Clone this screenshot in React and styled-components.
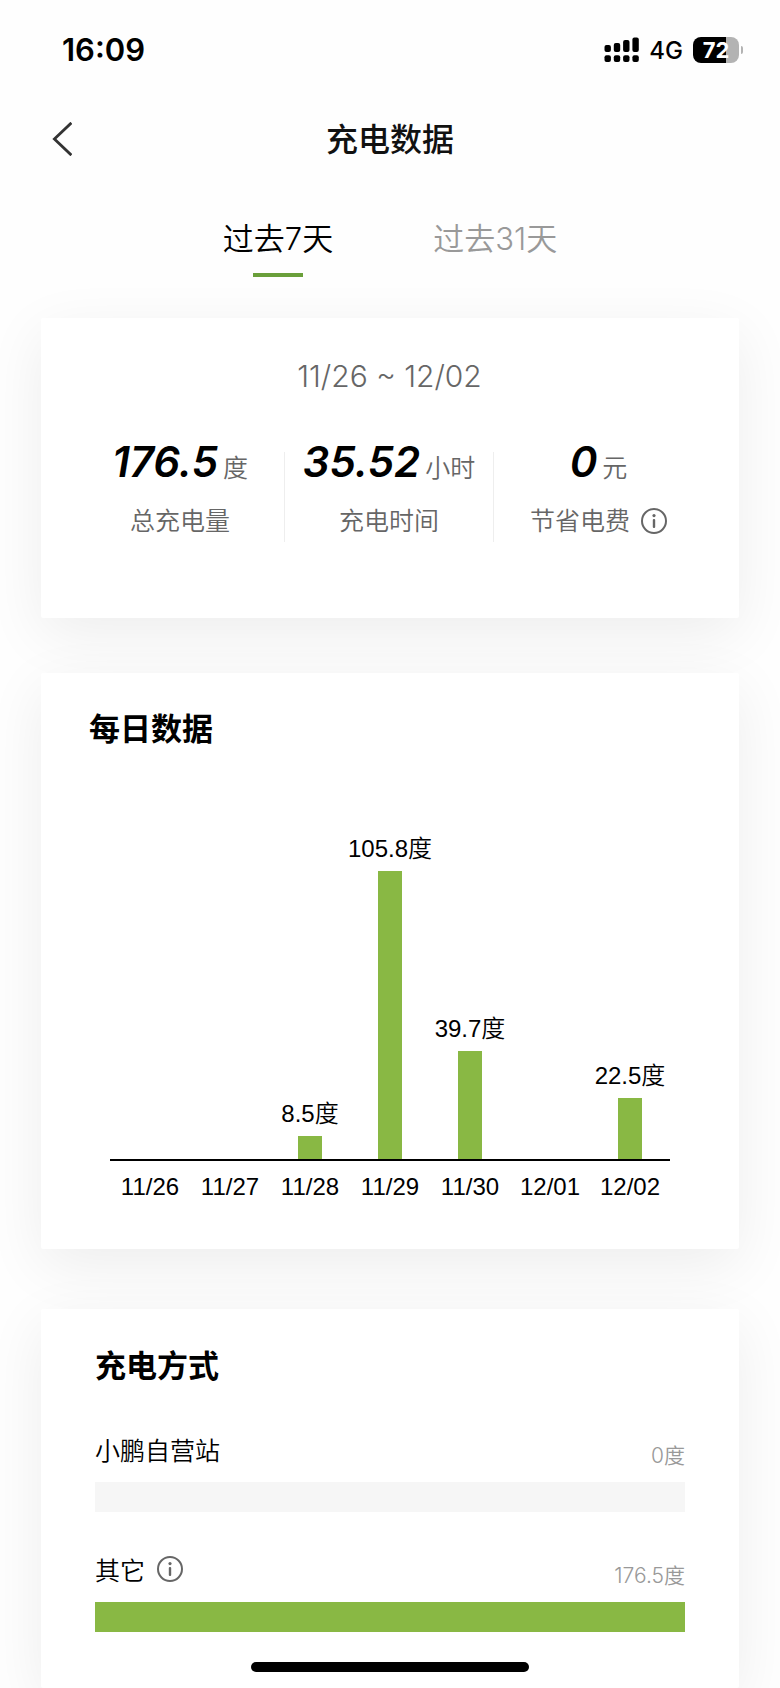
import React, { useState } from "react";
import styled, { createGlobalStyle } from "styled-components";

const tabs = ["过去7天", "过去31天"];

const stats = [
  { value: "176.5", unit: "度", label: "总充电量" },
  { value: "35.52", unit: "小时", label: "充电时间" },
  { value: "0", unit: "元", label: "节省电费", info: true },
];

const days = [
  { date: "11/26", value: 0 },
  { date: "11/27", value: 0 },
  { date: "11/28", value: 8.5 },
  { date: "11/29", value: 105.8 },
  { date: "11/30", value: 39.7 },
  { date: "12/01", value: 0 },
  { date: "12/02", value: 22.5 },
];

const sources = [
  { name: "小鹏自营站", value: 0 },
  { name: "其它", value: 176.5, info: true },
];

const total = 176.5;
const maxDay = 105.8;
const maxBarHeight = 288;

const SignalIcon = () => (
  <svg width="36" height="26" viewBox="0 0 36 26" aria-hidden="true">
    {[8, 6, 3, 0.5].map((top, i) => (
      <g key={top}>
        <rect x={0.5 + i * 9.3} y={top} width="6.4" height={15 - top} rx="2" />
        <rect x={0.5 + i * 9.3} y="18.2" width="6.4" height="6.8" rx="2" />
      </g>
    ))}
  </svg>
);

const InfoIcon = () => (
  <svg width="26" height="26" viewBox="0 0 26 26" aria-hidden="true">
    <circle cx="13" cy="13" r="12" fill="none" stroke="#666" strokeWidth="2" />
    <circle cx="13" cy="7.6" r="1.6" fill="#666" />
    <rect x="11.8" y="11" width="2.4" height="9" rx="1" fill="#666" />
  </svg>
);

const App = () => {
  const [active, setActive] = useState(0);

  return (
    <Page>
      <GlobalStyle />
      <StatusBar>
        <Time>16:09</Time>
        <StatusRight>
          <SignalIcon />
          <Network>4G</Network>
          <Battery>
            <BatteryBody>72</BatteryBody>
            <BatteryTip />
          </Battery>
        </StatusRight>
      </StatusBar>

      <Header>
        <BackButton type="button" aria-label="返回">
          <svg width="20" height="34" viewBox="0 0 20 34">
            <path d="M19.4 0.8 L2.4 17 L19.4 33.2" fill="none" stroke="#333" strokeWidth="2.8" />
          </svg>
        </BackButton>
        <Title>充电数据</Title>
      </Header>

      <Tabs role="tablist">
        {tabs.map((tab, i) => (
          <Tab
            key={tab}
            type="button"
            role="tab"
            aria-selected={active === i}
            $active={active === i}
            onClick={() => setActive(i)}
          >
            {tab}
          </Tab>
        ))}
      </Tabs>

      <Cards>
        <SummaryCard>
          <DateRange>11/26 ~ 12/02</DateRange>
          <StatGrid>
            {stats.map((stat) => (
              <Stat key={stat.label}>
                <StatValue>
                  <em>{stat.value}</em>
                  <span>{stat.unit}</span>
                </StatValue>
                <StatLabel>
                  {stat.label}
                  {stat.info && (
                    <InfoButton type="button" aria-label="节省电费说明">
                      <InfoIcon />
                    </InfoButton>
                  )}
                </StatLabel>
              </Stat>
            ))}
          </StatGrid>
        </SummaryCard>

        <DailyCard>
          <CardTitle>每日数据</CardTitle>
          <Chart>
            <Bars>
              {days.map((day) => (
                <BarColumn key={day.date}>
                  {day.value > 0 && <BarLabel>{day.value}度</BarLabel>}
                  <Bar
                    style={{
                      height: Math.round((day.value / maxDay) * maxBarHeight),
                    }}
                  />
                </BarColumn>
              ))}
            </Bars>
            <Dates>
              {days.map((day) => (
                <span key={day.date}>{day.date}</span>
              ))}
            </Dates>
          </Chart>
        </DailyCard>

        <SourceCard>
          <CardTitle>充电方式</CardTitle>
          <SourceList>
            {sources.map((source) => (
              <li key={source.name}>
                <SourceHead>
                  <SourceName>
                    {source.name}
                    {source.info && (
                      <InfoButton type="button" aria-label="其它说明">
                        <InfoIcon />
                      </InfoButton>
                    )}
                  </SourceName>
                  <SourceValue>{source.value}度</SourceValue>
                </SourceHead>
                <Track>
                  <Fill style={{ width: `${(source.value / total) * 100}%` }} />
                </Track>
              </li>
            ))}
          </SourceList>
        </SourceCard>
      </Cards>

      <HomeIndicator />
    </Page>
  );
};

export default App;

const GlobalStyle = createGlobalStyle`
  * {
    box-sizing: border-box;
  }
  body {
    margin: 0;
    background: #fefefe;
  }
  button {
    border: none;
    padding: 0;
    background: none;
    font: inherit;
    color: inherit;
    cursor: pointer;
  }
  svg {
    display: block;
  }
`;

const Page = styled.div`
  min-height: 100vh;
  display: flex;
  flex-direction: column;
  overflow: hidden;
  font-family: Inter, "Noto Sans CJK SC", sans-serif;
  font-weight: 350;
  color: #000;
`;

const StatusBar = styled.div`
  display: flex;
  justify-content: space-between;
  align-items: center;
  height: 100px;
  padding: 0 37px 0 62px;
`;

const Time = styled.span`
  font-size: 31px;
  font-weight: 600;
  line-height: 40px;
`;

const StatusRight = styled.div`
  display: flex;
  align-items: center;
`;

const Network = styled.span`
  margin: 0 10px 0 9px;
  padding-top: 1px;
  font-size: 24px;
  font-weight: 500;
  line-height: 30px;
`;

const Battery = styled.div`
  display: flex;
  align-items: center;
  gap: 2px;
`;

const BatteryBody = styled.span`
  width: 46px;
  height: 26px;
  border-radius: 8px;
  background: linear-gradient(90deg, #000 72%, #b3b3b3 72%);
  color: #fff;
  font-size: 22px;
  font-weight: 700;
  line-height: 26px;
  text-align: center;
`;

const BatteryTip = styled.span`
  width: 2px;
  height: 8px;
  border-radius: 0 2px 2px 0;
  background: #b3b3b3;
`;

const Header = styled.header`
  display: grid;
  grid-template-columns: 80px 1fr 80px;
  align-items: center;
  height: 78px;
`;

const BackButton = styled.button`
  padding-left: 52px;
`;

const Title = styled.h1`
  margin: 0;
  padding-top: 2px;
  font-size: 32px;
  font-weight: 500;
  line-height: 40px;
  text-align: center;
  color: #111;
`;

const Tabs = styled.div`
  display: flex;
  justify-content: center;
  gap: 100px;
  height: 140px;
  padding-top: 39px;
`;

const Tab = styled.button`
  display: flex;
  flex-direction: column;
  align-items: center;
  font-size: 31px;
  line-height: 44px;
  color: ${(props) => (props.$active ? "#000" : "#999")};
  &::after {
    content: "";
    width: 50px;
    height: 4px;
    margin-top: 12px;
    background: ${(props) => (props.$active ? "#6a9f3a" : "transparent")};
  }
`;

const Cards = styled.main`
  flex: 1;
  display: flex;
  flex-direction: column;
  padding: 0 41px;
`;

const Card = styled.section`
  background: #fff;
  border-radius: 2px;
  box-shadow: 0 16px 60px rgba(0, 0, 0, 0.07);
`;

const SummaryCard = styled(Card)`
  padding: 36px 36px 76px 35px;
`;

const DateRange = styled.p`
  margin: 0;
  font-size: 30px;
  line-height: 44px;
  text-align: center;
  color: #666;
`;

const StatGrid = styled.div`
  display: grid;
  grid-template-columns: repeat(3, minmax(0, 1fr));
  margin-top: 54px;
`;

const Stat = styled.div`
  display: flex;
  flex-direction: column;
  align-items: center;
  justify-content: space-between;
  height: 90px;
  border-right: 1px solid #eee;
  &:last-child {
    border-right: none;
  }
`;

const StatValue = styled.div`
  margin-top: -12px;
  display: flex;
  align-items: baseline;
  gap: 5px;
  font-size: 25px;
  line-height: 44px;
  color: #666;
  white-space: nowrap;
  em {
    font-size: 42px;
    font-weight: 600;
    color: #000;
  }
`;

const StatLabel = styled.div`
  display: flex;
  align-items: center;
  gap: 11px;
  font-size: 25px;
  line-height: 42px;
  color: #666;
`;

const InfoButton = styled.button`
  width: 26px;
  height: 26px;
`;

const CardTitle = styled.h2`
  margin: 0;
  font-size: 31px;
  font-weight: 600;
  line-height: 40px;
`;

const DailyCard = styled(Card)`
  margin-top: 55px;
  padding: 36px 48px 48px;
`;

const Chart = styled.div`
  margin: 80px 21px 0;
  font-family: "Liberation Sans", "Noto Sans CJK SC", sans-serif;
  font-size: 24px;
  line-height: 28px;
`;

const Bars = styled.div`
  display: grid;
  grid-template-columns: repeat(7, minmax(0, 1fr));
  height: 332px;
  border-bottom: 2px solid #000;
`;

const BarColumn = styled.div`
  display: flex;
  flex-direction: column;
  align-items: center;
  justify-content: flex-end;
`;

const BarLabel = styled.span`
  margin-bottom: 8px;
  white-space: nowrap;
`;

const Bar = styled.div`
  width: 24px;
  background: #89b844;
`;

const Dates = styled.div`
  display: grid;
  grid-template-columns: repeat(7, minmax(0, 1fr));
  margin-top: 12px;
  text-align: center;
`;

const SourceCard = styled(Card)`
  flex: 1;
  margin-top: 60px;
  padding: 37px 54px 40px;
`;

const SourceList = styled.ul`
  display: flex;
  flex-direction: column;
  gap: 40px;
  margin: 46px 0 0;
  padding: 0;
  list-style: none;
`;

const SourceHead = styled.div`
  display: flex;
  justify-content: space-between;
  height: 50px;
`;

const SourceName = styled.span`
  display: flex;
  align-items: center;
  gap: 12px;
  height: 34px;
  font-size: 25px;
`;

const SourceValue = styled.span`
  align-self: flex-end;
  margin-bottom: 12px;
  font-size: 21px;
  line-height: 28px;
  color: #999;
`;

const Track = styled.div`
  height: 30px;
  background: #f6f6f6;
`;

const Fill = styled.div`
  height: 100%;
  background: #89b844;
`;

const HomeIndicator = styled.div`
  position: fixed;
  bottom: 16px;
  left: 50%;
  width: 278px;
  height: 10px;
  margin-left: -139px;
  border-radius: 5px;
  background: #000;
`;
